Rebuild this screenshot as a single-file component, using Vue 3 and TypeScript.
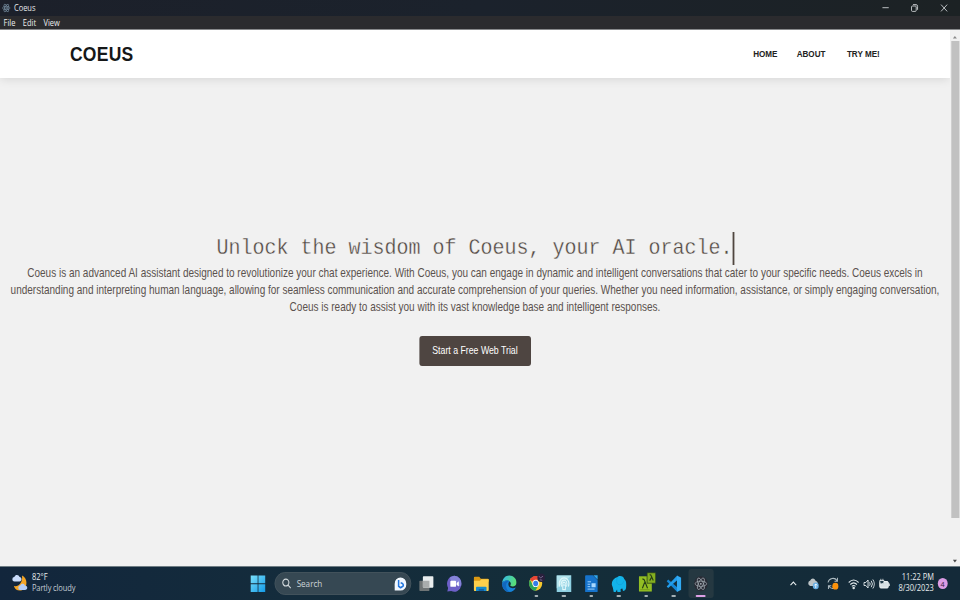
<script setup lang="ts">
const menus: string[] = ['File', 'Edit', 'View']
const links: string[] = ['HOME', 'ABOUT', 'TRY ME!']
const lines: string[] = [
  'Coeus is an advanced AI assistant designed to revolutionize your chat experience. With Coeus, you can engage in dynamic and intelligent conversations that cater to your specific needs. Coeus excels in',
  'understanding and interpreting human language, allowing for seamless communication and accurate comprehension of your queries. Whether you need information, assistance, or simply engaging conversation,',
  'Coeus is ready to assist you with its vast knowledge base and intelligent responses.',
]
</script>

<template>
  <div class="screen">
    <header class="titlebar">
      <svg class="app-icon" viewBox="0 0 20 20" fill="none" stroke="#71879a" stroke-width="1.5">
        <ellipse cx="10" cy="10" rx="8.5" ry="3.4" />
        <ellipse cx="10" cy="10" rx="8.5" ry="3.4" transform="rotate(60 10 10)" />
        <ellipse cx="10" cy="10" rx="8.5" ry="3.4" transform="rotate(120 10 10)" />
        <circle cx="10" cy="10" r="1.2" />
      </svg>
      <span class="app-name">Coeus</span>
      <div class="controls">
        <svg viewBox="0 0 10 10"><path d="M1.5 4.7h7" /></svg>
        <svg viewBox="0 0 10 10"><rect x="1.8" y="3" width="5.2" height="5.4" rx="1" /><path d="M3.4 1.6h3.4q1.7 0 1.7 1.7v3.5" /></svg>
        <svg viewBox="0 0 10 10"><path d="M1.6 1.6l6.8 6.8M8.4 1.6L1.6 8.4" /></svg>
      </div>
    </header>
    <nav class="menubar">
      <span v-for="m in menus" :key="m">{{ m }}</span>
    </nav>

    <div class="viewport">
      <main class="page">
        <div class="navbar">
          <span class="brand">COEUS</span>
          <div class="links"><a v-for="l in links" :key="l">{{ l }}</a></div>
        </div>
        <section class="hero">
          <h1>Unlock the wisdom of Coeus, your AI oracle.</h1>
          <p><span v-for="l in lines" :key="l">{{ l }}</span></p>
          <button type="button"><span>Start a Free Web Trial</span></button>
        </section>
      </main>
      <div class="scrollbar">
        <svg class="arrow" viewBox="0 0 8 5"><path d="M1 4.5L4 1l3 3.5z" fill="#8a8a8a" /></svg>
        <div class="thumb"></div>
        <svg class="arrow down" viewBox="0 0 8 5"><path d="M1 .8h6L4 4.4z" fill="#484848" /></svg>
      </div>
    </div>

    <footer class="taskbar">
      <div class="weather">
        <svg viewBox="0 0 18 18">
          <path d="M11.5 1.5C18 4 18 13.500 12 16 8 17.500 3.500 16 2.500 12c5 1 10-3 9-10.500z" fill="#f5a524" />
          <path d="M3 7.500a2.300 2.300 0 0 1 0-4.600C4 .2 8 .3 8.700 3c3 0 3 4.500 0 4.500z" fill="#c9dcfb" />
          <path d="M9.500 16a2.200 2.200 0 0 1 0-4.400c1-2.500 4.500-2.400 5.200 0 3.500 0 3.500 4.400 0 4.400z" fill="#b5cdf6" />
        </svg>
        <div class="weather-text"><span>82°F</span><span class="dim">Partly cloudy</span></div>
      </div>

      <div class="start">
        <svg viewBox="0 0 18 18">
          <defs><linearGradient id="win" x1="0" y1="0" x2="1" y2="1"><stop stop-color="#7be0fb" /><stop offset="1" stop-color="#129ae8" /></linearGradient></defs>
          <path d="M.5.5h8v8h-8zM9.400.5h8v8h-8zM.5 9.400h8v8h-8zM9.400 9.400h8v8h-8z" fill="url(#win)" />
        </svg>
      </div>
      <div class="search">
        <svg class="lens" viewBox="0 0 12 12" fill="none" stroke="#d3dadd" stroke-width="1.3"><circle cx="5" cy="5" r="3.700" /><path d="M7.700 7.700l3.300 3.300" /></svg>
        <span>Search</span>
        <svg class="bing" viewBox="0 0 14 14"><path d="M.4 7A6.600 6.600 0 1 1 7 13.600H.5z" fill="#f1f8ff" /><path d="M4.900 2.900v6.300l2.200 1.500 2.900-1.700c.8-1.900-1-2.700-2.800-3.200" fill="none" stroke="#2377df" stroke-width="1.700" stroke-linejoin="round" /></svg>
      </div>

      <div class="apps">
        <div class="app">
          <svg viewBox="0 0 18 18"><rect x="1" y="6" width="11.500" height="10.500" rx=".8" fill="#6e7475" /><rect x="5" y="1.200" width="12" height="11.800" rx=".8" fill="#e9edee" /><path d="M5 6h7.500v7H5z" fill="#a9adad" /></svg>
        </div>
        <div class="app">
          <svg viewBox="0 0 18 18"><path d="M9 .8a8.200 8.200 0 1 1-3.500 15.600L1 17l1-3.700A8.200 8.200 0 0 1 9 .8z" fill="#6c5fc7" /><path d="M9 .8a8.200 8.200 0 0 1 8 10C12 13 5 8 4 2.500z" fill="#8584d9" /><rect x="4.500" y="6" width="6.500" height="6.200" rx="1" fill="#fff" /><path d="M11.700 8.200l2.500-1.700v5.200l-2.500-1.700z" fill="#fff" /></svg>
        </div>
        <div class="app">
          <svg viewBox="0 0 18 18"><path d="M.5 3q0-1.200 1.200-1.200h5l1.800 2h8q1 0 1 1V7H.5z" fill="#dc9913" /><path d="M.5 6h7l1.500-1.600h8.500v11q0 1-1 1h-15q-1 0-1-1z" fill="#fed04b" /><path d="M4 12.200h10q1 0 1 1v3.200H3v-3.200q0-1 1-1z" fill="#168bcd" /><path d="M6 14.500h6v1.900H6z" fill="#1063a9" /></svg>
        </div>
        <div class="app">
          <svg viewBox="0 0 18 18"><defs><linearGradient id="edge" x1="0" y1="0" x2="1" y2=".3"><stop stop-color="#34b7ed" /><stop offset="1" stop-color="#58df78" /></linearGradient></defs><path d="M1 8C1.500 3.500 5 .6 9 .6c5 0 8.500 3.500 8.500 7.400 0 3.400-4.500 4.600-7 3.100-.8-.6.7-1 .3-2.700C10 5.500 4.500 4.500 1 8z" fill="url(#edge)" /><path d="M1 8c2-3.200 6.500-3.400 8.700-1.200C7 8 7.500 13.500 13 13.500c1.500 0 2.500-.3 3.600-.7C15 16 12 17.500 9 17.500 3.500 17.500.5 13 1 8z" fill="#1683d8" /><path d="M6 8.500C4.500 12 6.500 16.500 10 17.300 5 18 1 13.500 1 9.500 2 7 5.500 5.500 9 6.600 7.500 7 6.500 7.500 6 8.500z" fill="#1267bd" /></svg>
        </div>
        <div class="app run">
          <svg class="wide" viewBox="0 0 22 20"><circle cx="9" cy="11" r="8" fill="#f5c82e" /><path d="M9 11L2 7a8 8 0 0 1 14-.1H9z" fill="#e84435" /><path d="M2 7a8 8 0 0 0 6.700 12L12.500 13H5.600z" fill="#2ba45b" /><circle cx="9" cy="11" r="4" fill="#f5f9fb" /><circle cx="9" cy="11" r="3" fill="#357de8" /><circle cx="15.800" cy="4.700" r="4.700" fill="#29203d" /><path d="M13 3l2 2 3-2M14 7l3 .5" stroke="#817299" stroke-width="1" fill="none" /></svg><i></i>
        </div>
        <div class="app run">
          <svg viewBox="0 0 18 18"><path d="M.5.5h17v17H.5z" fill="#8ed0e2" /><path d="M.5.5h17L.5 14z" fill="#b1e3ed" /><g fill="none" stroke="#e1f7fa" stroke-width="1.200"><path d="M4 12C2 6 6 3 9 3s7 3 5 9M6.200 12c-1.500-4 .5-6.700 2.800-6.700s4.300 2.700 2.800 6.700" /><circle cx="9" cy="9" r="1.500" /><path d="M7.500 10v5h3v-5" /></g></svg><i></i>
        </div>
        <div class="app run">
          <svg viewBox="0 0 18 18"><path d="M3.200.3H11l5.500 5.200v11.200q0 1-1 1H3.200q-1 0-1-1V1.300q0-1 1-1z" fill="#1673cb" /><path d="M11.500.3h5V5z" fill="#30a5ed" /><path d="M5 7h4M5 9.500h3M5 12h3M5 14.500h8" stroke="#a8d8ff" stroke-width="1" /><path d="M9.500 8.500h4.700v4H9.500z" fill="#a8d8ff" /></svg><i></i>
        </div>
        <div class="app run">
          <svg viewBox="0 0 18 18"><path d="M.8 10C.8 5 4 3 7 2.300 9 0 14.500.8 15 4c3.500 3 3 8 1.500 11-1.500 2-3.300 2-3.300 0l-.3-1-2 .3v3.200H7.200l-.4-2.500-1.600 2.500H3L2 13z" fill="#13b3e9" /><path d="M7 3c-1.500 3.500-.5 7 3 7 3 0 4-2 4.500-4" fill="none" stroke="#0fa2dc" stroke-width=".8" /></svg><i></i>
        </div>
        <div class="app run">
          <svg class="notes" viewBox="0 0 21 21"><path d="M1 4.500h15v16H1z" fill="#92be23" /><path d="M10.500.8h10v11h-10z" fill="#83ae20" stroke="#273d1b" stroke-width=".8" /><path d="M13.500 3q1.500-.5 2 1.500L17.700 9M15.500 6l-2 3M5 7.500q2-.5 2.600 1.700L11 17M7.600 11L5 17" fill="none" stroke="#243b18" stroke-width="1.300" /><path d="M2.500 18.500h11" stroke="#769c1b" /></svg><i></i>
        </div>
        <div class="app run">
          <svg viewBox="0 0 18 18"><path d="M12.800.6v16.800L.8 6.300l1.700-1.600 10.300 7.800V.6z" fill="#1487d6" /><path d="M12.800.6L.8 11.700l1.700 1.600 10.300-7.800z" fill="#229deb" /><path d="M12.500.5l5 2.300v12.400l-5 2.300z" fill="#31aaf3" /></svg><i></i>
        </div>
        <div class="app run active">
          <svg viewBox="0 0 18 18" fill="none"><circle cx="9" cy="9" r="7.800" fill="#292b35" /><g stroke="#a0aab1" stroke-width=".8"><ellipse cx="9" cy="9" rx="6.600" ry="2.700" /><ellipse cx="9" cy="9" rx="6.600" ry="2.700" transform="rotate(60 9 9)" /><ellipse cx="9" cy="9" rx="6.600" ry="2.700" transform="rotate(120 9 9)" /></g><circle cx="9" cy="9" r=".9" fill="#c2cbd0" /></svg><i></i>
        </div>
      </div>

      <div class="tray">
        <svg class="chev" viewBox="0 0 10 10" fill="none" stroke="#e7edef" stroke-width="1.300"><path d="M1.500 6.800L5 3.300l3.500 3.500" /></svg>
        <svg class="cloud" viewBox="0 0 13 13"><path d="M3.300 9a2.800 2.800 0 0 1 0-5.500C4.500.5 8.500.8 9.300 4c3 0 3 5 0 5z" fill="#bdc4c7" /><circle cx="9.400" cy="8.900" r="3.300" fill="#67aee4" /><path d="M9.400 11V7M7.800 8.500l1.600-1.600L11 8.500" stroke="#fff" fill="none" stroke-width=".9" /></svg>
        <svg class="sync" viewBox="0 0 13 13"><path d="M1 5.500C2 1 8.500 0 11 3.600M11.500.8v3.400H8.200M11.700 7c-1 5-7.500 6-9.700 2M1.500 12V8.700h3.200" fill="none" stroke="#aebbc1" stroke-width="1.100" /><circle cx="9.200" cy="9.200" r="3.400" fill="#fb920b" /></svg>
        <svg class="wifi" viewBox="0 0 13 12" fill="none" stroke="#dfe7ea" stroke-width="1.100"><path d="M1 4.500q5.500-5 11 0M2.800 6.500q3.700-3.400 7.400 0M4.500 8.400q2-1.800 4 0" /><circle cx="6.500" cy="10" r=".8" fill="#dfe7ea" /></svg>
        <svg class="sound" viewBox="0 0 13 12" fill="none" stroke="#dfe7ea" stroke-width="1"><path d="M1 4.500h2L5.500 2v8L3 7.500H1zM7.200 4.300q1.400 1.700 0 3.400M9 2.800q2.700 3.200 0 6.400M10.800 1.500q3.500 4.500 0 9" /></svg>
        <svg class="battery" viewBox="0 0 13 12"><rect x="1.500" y="3.500" width="9.500" height="6.500" rx="1.300" fill="#d7e0e3" stroke="#f1f5f6" /><path d="M12 5.500v2.500" stroke="#f1f5f6" stroke-width="1.200" /><path d="M2.700.8v2M5 .8v2M1.500 2.500h4.700v2q-2.300 3-4.700 0z" stroke="#f3f7f8" fill="#223d4b" stroke-width=".8" /></svg>
        <div class="clock"><span>11:22 PM</span><span>8/30/2023</span></div>
        <span class="badge">4</span>
      </div>
    </footer>
  </div>
</template>

<style>
html, body { margin: 0; overflow: hidden; background: #f1f1f1; }
</style>

<style scoped>
.screen {
  width: 1066.667px;
  height: 600px;
  transform: scaleX(0.9);
  transform-origin: 0 0;
  display: flex;
  flex-direction: column;
  overflow: hidden;
  font-family: "Open Sans", "Noto Sans", sans-serif;
}
.screen * { box-sizing: border-box; }
svg { display: block; flex: none; }
.titlebar { height: 16px; flex: none; background: linear-gradient(90deg, #1c202a, #1b222c 50%, #1c2224); display: flex; align-items: center; padding-left: 1.500px; color: #e4e6e9; }
.app-icon { width: 10px; height: 10px; }
.app-name { font-size: 8.300px; margin-left: 4px; line-height: 11px; padding-bottom: 1px; }
.controls { margin-left: auto; display: flex; gap: 22.300px; padding-right: 13px; }
.controls svg { width: 10px; height: 10px; fill: none; stroke: #d5d8da; stroke-width: 0.9; }
.menubar { height: 14px; flex: none; background: #2b2b2e; border-bottom: 0.500px solid #88898b; display: flex; align-items: center; padding-left: 4px; gap: 8.200px; font-size: 8.300px; color: #ededee; }
.viewport { height: 536px; flex: none; display: flex; background: #f1f1f1; }
.page { width: 1055.500px; font-family: "Liberation Sans", Arial, sans-serif; overflow: hidden; }
.navbar { height: 48.300px; background: #fff; box-shadow: 0 1px 10px rgba(0, 0, 0, 0.12); display: flex; align-items: center; justify-content: space-between; padding: 0 78px 0 77.700px; }
.brand { font-weight: 700; font-size: 19.440px; letter-spacing: 0.300px; color: #151718; }
.links { display: flex; gap: 21.300px; font-size: 9px; font-weight: 700; color: #222; transform: scaleY(1.1); }
.links a:last-child { margin-left: 2.500px; }
.hero { padding-top: 153.700px; display: flex; flex-direction: column; align-items: center; color: #504640; }
h1 { margin: 0; height: 33.300px; padding-left: 1px; font: 400 22.220px/34px "Liberation Mono", "Courier New", monospace; -webkit-text-stroke: 0.350px #f1f1f1; border-right: 2px solid #504640; white-space: nowrap; }
p { margin: 0; font-size: 11.110px; line-height: 16.670px; text-align: center; white-space: nowrap; color: #5b524e; }
p span { display: block; transform: scaleY(1.07); }
button { margin-top: 20.800px; width: 124px; height: 29.500px; border: 0; border-radius: 3px; padding: 0 0 1px; background: #4e4541; color: #fff; font: 400 9.720px "Liberation Sans", Arial, sans-serif; }
button span { display: block; transform: scaleY(1.1); }
.scrollbar { width: 11.167px; background: #f1f1f1; display: flex; flex-direction: column; align-items: center; }
.arrow { width: 6px; height: 4px; margin: 4.500px 0 2.500px; }
.thumb { width: 9px; height: 477px; background: #c1c1c1; }
.down { margin: 41px 0 0; }
.taskbar { height: 34px; flex: none; background: linear-gradient(90deg, #12263c, #142c3c 30%, #142d39 60%, #142a39); border-top: 1px solid #6f7d84; display: flex; align-items: center; color: #e8edef; font-size: 8.300px; }
.weather { width: 265px; padding-left: 13px; display: flex; gap: 4.500px; align-items: center; }
.weather svg { width: 18px; height: 18px; margin-top: -2px; }
.weather-text { display: flex; flex-direction: column; line-height: 11px; padding-bottom: 2.500px; }
.dim { color: #c3ccd4; letter-spacing: -0.120px; }
.start { width: 39.600px; display: flex; padding-left: 12.800px; }
.start svg { width: 17.500px; height: 17.500px; }
.search { width: 152px; height: 22.500px; border-radius: 12px; background: #364853; border: 0.500px solid #43535d; display: flex; align-items: center; padding: 0 3.500px 0 7px; color: #cdd5d9; }
.lens { width: 11px; height: 11px; }
.search span { margin-left: 6px; font-size: 9px; }
.bing { width: 14px; height: 14px; margin-left: auto; }
.apps { display: flex; margin-left: 2px; }
.app { width: 30.500px; height: 33px; display: flex; align-items: center; justify-content: center; position: relative; }
.app svg { width: 17.500px; height: 17.500px; }
.app .wide { width: 20px; height: 19px; margin-top: -2px; margin-left: 2px; }
.app .notes { width: 20px; height: 20px; margin: -3px 0 0 2px; }
.app i { position: absolute; bottom: 3.500px; width: 4.500px; height: 2px; border-radius: 1px; background: #a5b0b5; }
.active::before { content: ""; position: absolute; inset: 2px 1.300px; background: #253841; border-radius: 3px; }
.active svg { position: relative; }
.active i { width: 11px; background: #dda0e6; }
.tray { margin-left: auto; padding-right: 13.500px; display: flex; align-items: center; }
.chev { width: 9px; height: 9px; }
.cloud { width: 13px; height: 13px; margin-left: 11px; }
.sync { width: 13px; height: 13px; margin-left: 9px; }
.wifi { width: 13px; height: 12px; margin-left: 9.500px; }
.sound { width: 13px; height: 12px; margin-left: 4px; }
.battery { width: 13px; height: 12px; margin-left: 4px; }
.clock { width: 46px; margin-left: 2.800px; padding-bottom: 2.500px; display: flex; flex-direction: column; text-align: right; align-items: flex-end; line-height: 11px; white-space: nowrap; }
.badge { width: 11.500px; height: 11.500px; margin-left: 4px; border-radius: 50%; background: #dc9ce4; color: #35203b; font-size: 8px; line-height: 11.500px; text-align: center; }
</style>
